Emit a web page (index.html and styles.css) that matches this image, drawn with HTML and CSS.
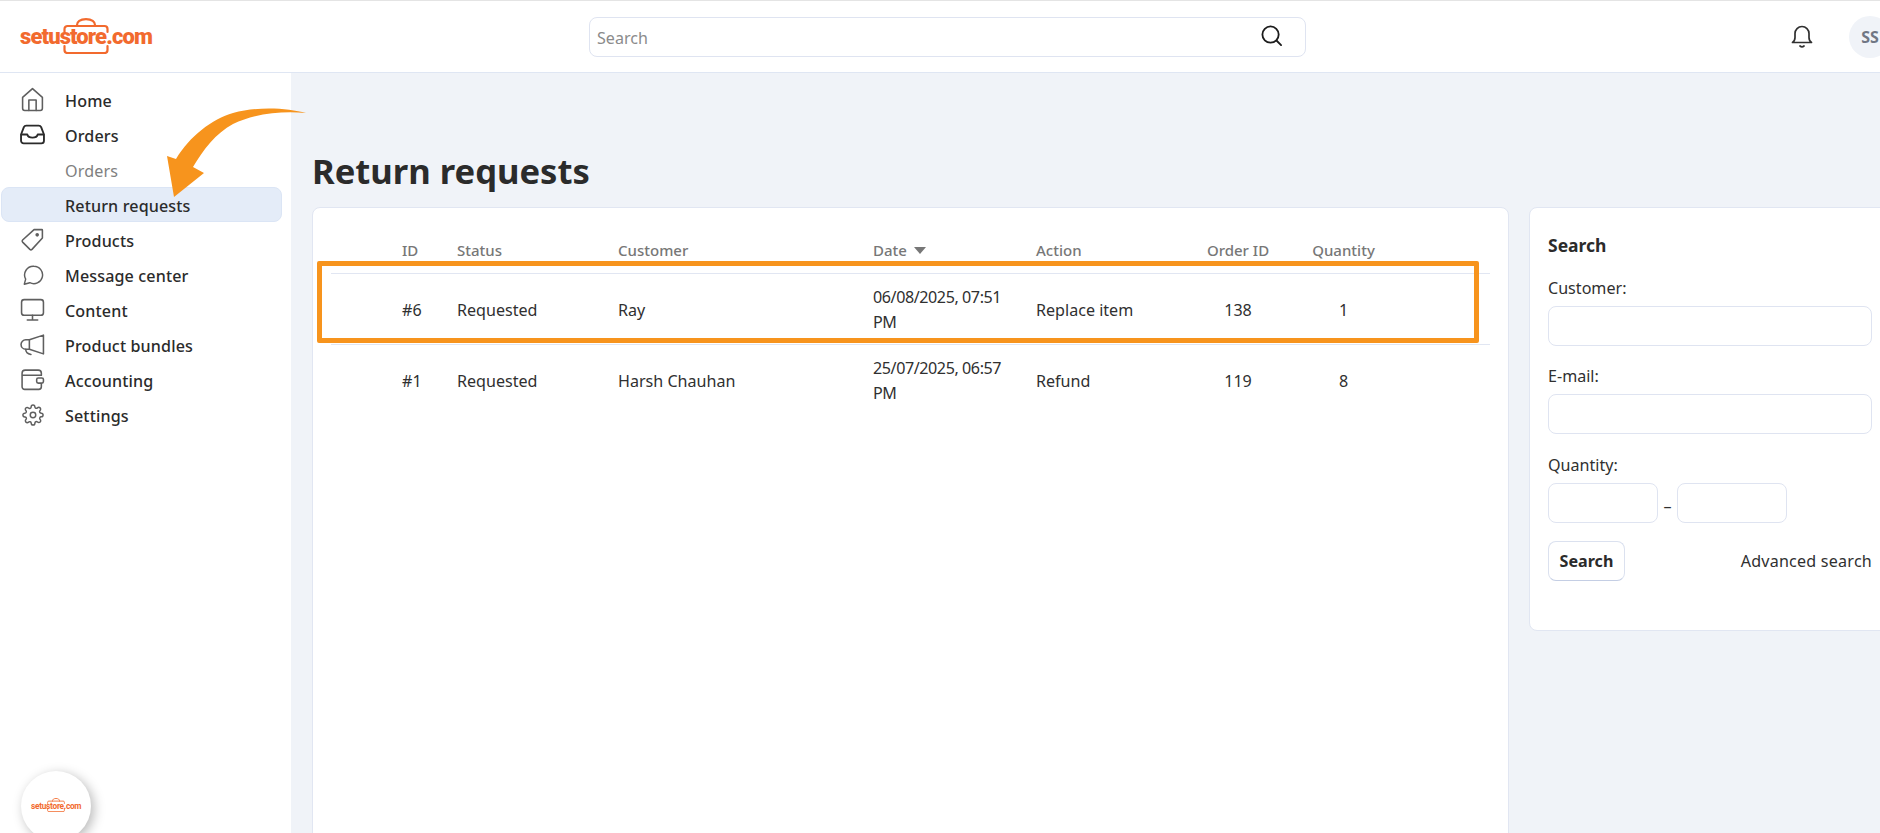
FILE: index.html
```html
<!DOCTYPE html>
<html lang="en">
<head>
<meta charset="utf-8">
<title>Return requests</title>
<link rel="stylesheet" href="styles.css">
</head>
<body>
<header class="topbar">
  <div class="brand-area">
    <div class="logo">
      <svg class="logo-bag" viewBox="0 0 46 36" fill="none" stroke="#f26a2e" stroke-width="2.2" stroke-linecap="round" stroke-linejoin="round"><path d="M1.5 14V11a3 3 0 0 1 3-3h37a3 3 0 0 1 3 3v3"/><path d="M1.5 28v4a3 3 0 0 0 3 3h37a3 3 0 0 0 3-3v-4"/><path d="M14 8V7c0-3 3-5.800 9-5.800S32 4 32 7v1"/></svg>
      <span class="logo-text">setustore.com</span>
    </div>
  </div>
  <div class="global-search">
    <input class="global-input" type="text" placeholder="Search">
    <svg class="global-icon" viewBox="0 0 24 24" fill="none" stroke="#1c1c1c" stroke-width="1.900" stroke-linecap="round"><circle cx="11" cy="11" r="8.500"/><path d="M17.200 17.200 22 22"/></svg>
  </div>
  <div class="top-actions">
    <svg class="bell" viewBox="0 0 24 24" fill="none" stroke="#303030" stroke-width="1.700" stroke-linecap="round" stroke-linejoin="round"><path d="M2.500 18.500c1.500-1 2.500-2.500 2.500-5V9.500a7 7 0 0 1 14 0v4c0 2.500 1 4 2.500 5Z"/><path d="M10 22c1 .8 3 .8 4 0"/></svg>
    <div class="avatar">SS</div>
  </div>
</header>

<div class="shell">
  <nav class="sidebar">
    <a class="nav-row"><svg class="nav-icon" viewBox="0 0 24 24"><path d="M2.500 10 12 1.500l9.500 8.500v10.500a2 2 0 0 1-2 2h-15a2 2 0 0 1-2-2Z"/><path d="M8.500 22.500V12.500h7v10"/></svg><span>Home</span></a>
    <a class="nav-row"><svg class="nav-icon dark" viewBox="0 0 24 24"><path d="M6 3.500h12a2.500 2.500 0 0 1 2.300 1.500L23 12v6a2.500 2.500 0 0 1-2.500 2.500h-17A2.500 2.500 0 0 1 1 18v-6l2.700-7A2.500 2.500 0 0 1 6 3.500Z"/><path d="M1.500 12H7c.5 2 2.500 3 5 3s4.500-1 5-3h5.500"/></svg><span>Orders</span></a>
    <a class="nav-row sub"><span>Orders</span></a>
    <a class="nav-row sub current"><span>Return requests</span></a>
    <a class="nav-row"><svg class="nav-icon" viewBox="0 0 24 24"><path d="M13.500 2.500H21a.5.5 0 0 1 .5.500v7.500L11.500 21.500a1.500 1.500 0 0 1-2 0L2.500 14.500a1.500 1.500 0 0 1 0-2Z"/><circle cx="16.500" cy="7.500" r="1" fill="#5f5f5f"/></svg><span>Products</span></a>
    <a class="nav-row"><svg class="nav-icon sm" viewBox="0 0 24 24"><path d="M13 2.500a9.500 9.500 0 1 1-4.500 17.900L2.500 22l1.500-5.500A9.500 9.500 0 0 1 13 2.500Z"/></svg><span>Message center</span></a>
    <a class="nav-row"><svg class="nav-icon" viewBox="0 0 24 24"><rect x="1.500" y="2.500" width="21" height="15" rx="2.500"/><path d="M12 17.500v4M7 22h10"/></svg><span>Content</span></a>
    <a class="nav-row"><svg class="nav-icon" viewBox="0 0 24 24"><path d="M22.500 3 9 7.500H5.500a4.500 4.500 0 0 0 0 9H9L22.500 21Z"/><path d="M9 7.500v9M5.500 16.500c0 3 2 4.500 5 5"/></svg><span>Product bundles</span></a>
    <a class="nav-row"><svg class="nav-icon" viewBox="0 0 24 24"><path d="M20.500 8V6a3 3 0 0 0-3-3H5a3 3 0 0 0-3 3v13a2.500 2.500 0 0 0 2.500 2.500H18a2.500 2.500 0 0 0 2.500-2.500v-3"/><path d="M2.500 8h18"/><rect x="16" y="10.500" width="6.500" height="5" rx="1.500"/></svg><span>Accounting</span></a>
    <a class="nav-row"><svg class="nav-icon sm" viewBox="0 0 24 24"><circle cx="12" cy="12" r="3"/><path d="M19.400 15a1.650 1.650 0 0 0 .33 1.820l.06.06a2 2 0 0 1 0 2.830 2 2 0 0 1-2.830 0l-.06-.06a1.650 1.650 0 0 0-1.820-.33 1.650 1.650 0 0 0-1 1.510V21a2 2 0 0 1-2 2 2 2 0 0 1-2-2v-.09A1.650 1.650 0 0 0 9 19.400a1.650 1.650 0 0 0-1.820.33l-.06.06a2 2 0 0 1-2.830 0 2 2 0 0 1 0-2.830l.06-.06a1.650 1.650 0 0 0 .33-1.820 1.650 1.650 0 0 0-1.510-1H3a2 2 0 0 1-2-2 2 2 0 0 1 2-2h.09A1.650 1.650 0 0 0 4.600 9a1.650 1.650 0 0 0-.33-1.820l-.06-.06a2 2 0 0 1 0-2.830 2 2 0 0 1 2.830 0l.06.06a1.650 1.650 0 0 0 1.820.33H9a1.650 1.650 0 0 0 1-1.510V3a2 2 0 0 1 2-2 2 2 0 0 1 2 2v.09a1.650 1.650 0 0 0 1 1.510 1.650 1.650 0 0 0 1.820-.33l.06-.06a2 2 0 0 1 2.830 0 2 2 0 0 1 0 2.830l-.06.06a1.650 1.650 0 0 0-.33 1.820V9a1.650 1.650 0 0 0 1.510 1H21a2 2 0 0 1 2 2 2 2 0 0 1-2 2h-.09a1.650 1.650 0 0 0-1.510 1z"/></svg><span>Settings</span></a>
  </nav>

  <main class="content">
    <h1 class="page-title">Return requests</h1>
    <div class="columns">
      <section class="card table-card">
        <table class="requests">
          <thead>
            <tr>
              <th class="c-select"></th>
              <th class="c-id">ID</th>
              <th class="c-status">Status</th>
              <th class="c-customer">Customer</th>
              <th class="c-date">Date <span class="sort-caret"></span></th>
              <th class="c-action">Action</th>
              <th class="c-num c-order">Order ID</th>
              <th class="c-num c-qty">Quantity</th>
              <th class="c-rest"></th>
            </tr>
          </thead>
          <tbody>
            <tr>
              <td></td><td>#6</td><td>Requested</td><td>Ray</td>
              <td class="date-cell">06/08/2025, 07:51<br>PM</td><td>Replace item</td>
              <td class="c-num">138</td><td class="c-num">1</td><td></td>
            </tr>
            <tr>
              <td></td><td>#1</td><td>Requested</td><td>Harsh Chauhan</td>
              <td class="date-cell">25/07/2025, 06:57<br>PM</td><td>Refund</td>
              <td class="c-num">119</td><td class="c-num">8</td><td></td>
            </tr>
          </tbody>
        </table>
      </section>

      <aside class="card search-card">
        <h2 class="search-title">Search</h2>
        <label class="field-label first">Customer:</label>
        <input class="field wide" type="text">
        <label class="field-label">E-mail:</label>
        <input class="field wide" type="text">
        <label class="field-label third">Quantity:</label>
        <div class="range">
          <input class="field short" type="text"><span class="range-dash">–</span><input class="field short" type="text">
        </div>
        <div class="search-actions">
          <button class="search-btn" type="button">Search</button>
          <a class="advanced">Advanced search</a>
        </div>
      </aside>
    </div>
  </main>
</div>

<div class="float-logo">
  <div class="logo mini">
    <svg class="logo-bag" viewBox="0 0 46 36" fill="none" stroke="#f26a2e" stroke-width="2.200" stroke-linecap="round" stroke-linejoin="round"><path d="M1.500 14V11a3 3 0 0 1 3-3h37a3 3 0 0 1 3 3v3"/><path d="M1.500 28v4a3 3 0 0 0 3 3h37a3 3 0 0 0 3-3v-4"/><path d="M14 8V7c0-3 3-5.800 9-5.800S32 4 32 7v1"/></svg>
    <span class="logo-text">setustore.com</span>
  </div>
</div>

<div class="callout-box"></div>
<svg class="callout-arrow" viewBox="0 0 320 220"><path fill="#f7941d" d="M306 113C288 108 258 106 233 113C212 119 190 136 176 159L167 156L174 197L204 173L193 167C203 150 216 133 233 124C255 113 283 111 306 113Z"/></svg>
</body>
</html>
```

FILE: styles.css
```css
* { box-sizing: border-box; }
html, body { margin: 0; height: 100%; }
body {
  width: 1880px;
  height: 833px;
  overflow: hidden;
  position: relative;
  background: #f0f3f8;
  color: #303030;
  font-family: "Noto Sans", "Open Sans", sans-serif;
  font-size: 16.1px;
  line-height: 25px;
}

/* top bar */
.topbar {
  display: flex;
  align-items: center;
  height: 73px;
  background: #fff;
  border-top: 1px solid #e4e4e4;
  border-bottom: 1px solid #dfe6f3;
}
.brand-area { width: 589px; padding-left: 20px; flex: none; }
.logo { position: relative; width: 132px; height: 36px; }
.logo-bag { position: absolute; left: 43px; top: -1px; width: 46px; height: 36px; }
.logo-text {
  position: absolute;
  left: 0;
  top: 4px;
  font-family: "Roboto", sans-serif;
  font-weight: 900;
  font-size: 22px;
  line-height: 28px;
  letter-spacing: -.9px;
  color: #f26a2e;
  white-space: nowrap;
}
.global-search { position: relative; width: 717px; height: 40px; flex: none; margin-top: 1px; }
.global-input {
  width: 100%;
  height: 100%;
  padding: 2px 7px 0;
  font: inherit;
  color: inherit;
  background: #fff;
  border: 1px solid #dfe4f1;
  border-radius: 8px;
  outline: none;
}
.global-input::placeholder { color: #8b8b8b; opacity: 1; }
.global-icon { position: absolute; right: 23px; top: 7px; width: 23px; height: 23px; }
.top-actions { display: flex; align-items: center; margin-left: auto; margin-right: -11px; flex: none; gap: 35px; }
.bell { width: 24px; height: 24px; margin-top: -2px; }
.avatar {
  width: 42px;
  height: 42px;
  border-radius: 50%;
  background: #f0f3f8;
  color: #707784;
  font-weight: 700;
  font-size: 16px;
  text-align: center;
  line-height: 42px;
}

/* layout */
.shell { display: flex; height: 760px; }
.sidebar { width: 291px; flex: none; padding: 9px 0 0 1px; background: #fff; }
.nav-row {
  display: flex;
  align-items: center;
  gap: 20px;
  height: 35px;
  width: 281px;
  padding-left: 19px;
  font-weight: 500;
  letter-spacing: .13px;
  color: #2b2b2b;
}
.nav-row span { padding-top: 3px; }
.nav-icon {
  width: 25px;
  height: 25px;
  flex: none;
  fill: none;
  stroke: #5f5f5f;
  stroke-width: 1.500;
  stroke-linecap: round;
  stroke-linejoin: round;
}
.nav-icon.sm { width: 22px; height: 22px; margin: 0 1.5px; stroke-width: 1.600; }
.nav-icon.dark { stroke: #2b2b2b; stroke-width: 1.800; }
.nav-row.sub { padding-left: 64px; }
.nav-row.sub:not(.current) { color: #808080; font-weight: 400; }
.nav-row.current { background: #e4ecf8; border: 1px solid #dbe5f5; border-radius: 8px; padding-left: 63px; }

.content { flex: 1; min-width: 0; padding: 74px 0 0 21px; }
.page-title {
  margin: 0 0 12px;
  font-size: 34.6px;
  line-height: 48px;
  font-weight: 700;
  color: #2b2b2b;
}
.columns { display: flex; gap: 20px; align-items: flex-start; }
.card { background: #fff; border: 1px solid #e1e6f2; border-radius: 8px; }
.table-card { width: 1197px; height: 760px; flex: none; padding: 24px 0 0 18px; }

/* table */
.requests { width: 1159px; border-collapse: collapse; table-layout: fixed; }
.requests th {
  height: 41px;
  padding: 0 0 4px;
  text-align: left;
  font-weight: 500;
  color: #777;
  font-size: 15px;
}
.requests td { height: 71px; padding: 3px 0 0; border-top: 1px solid #e1e6f2; }
.requests .date-cell { letter-spacing: -.42px; }
.requests .c-num { text-align: center; }
.c-select { width: 71px; }
.c-id { width: 55px; }
.c-status { width: 161px; }
.c-customer { width: 255px; }
.c-date { width: 163px; }
.c-action { width: 161px; }
.c-order { width: 82px; }
.c-qty { width: 129px; }
.sort-caret {
  display: inline-block;
  margin: 0 0 2px 3px;
  border-left: 6px solid transparent;
  border-right: 6px solid transparent;
  border-top: 7px solid #777;
  vertical-align: middle;
}

/* search panel */
.search-card { width: 365px; height: 424px; flex: none; padding: 24px 0 0 18px; }
.search-title { margin: 0; font-size: 17.5px; line-height: 26px; font-weight: 700; color: #2b2b2b; }
.field-label { display: block; margin: 18px 0 5px; line-height: 25px; }
.field-label.first { margin-top: 18px; }
.field-label.third { margin-top: 19px; }
.field {
  display: block;
  height: 40px;
  padding: 0 8px;
  font: inherit;
  background: #fff;
  border: 1px solid #dfe4f1;
  border-radius: 8px;
  outline: none;
}
.field.wide { width: 324px; }
.field.short { width: 110px; }
.range { display: flex; align-items: center; }
.range-dash { width: 19px; text-align: center; padding-top: 6px; }
.search-actions { display: flex; align-items: center; justify-content: space-between; width: 324px; margin-top: 18px; }
.search-btn {
  width: 77px;
  height: 40px;
  padding: 0;
  font: inherit;
  font-weight: 700;
  color: #2b2b2b;
  background: #fff;
  border: 1px solid #dbe1ef;
  border-bottom-color: #c4cee4;
  border-radius: 8px;
}
.advanced { color: #303030; letter-spacing: .22px; }

/* overlays */
.float-logo {
  position: absolute;
  left: 21px;
  top: 771px;
  width: 70px;
  height: 70px;
  border-radius: 50%;
  background: #fff;
  box-shadow: 3px 3px 12px rgba(0, 0, 0, .28);
  display: flex;
  align-items: center;
  justify-content: center;
}
.logo.mini { width: 50px; height: 14px; }
.mini .logo-bag { left: 16px; top: -1px; width: 18px; height: 14px; }
.mini .logo-text { top: 0; font-size: 8.300px; font-weight: 700; line-height: 14px; letter-spacing: -.28px; }
.callout-box {
  position: absolute;
  left: 317px;
  top: 261px;
  width: 1162px;
  height: 82px;
  border: 5px solid #f7941d;
  border-radius: 2px;
}
.callout-arrow { position: absolute; left: 0; top: 0; width: 320px; height: 220px; }
```
